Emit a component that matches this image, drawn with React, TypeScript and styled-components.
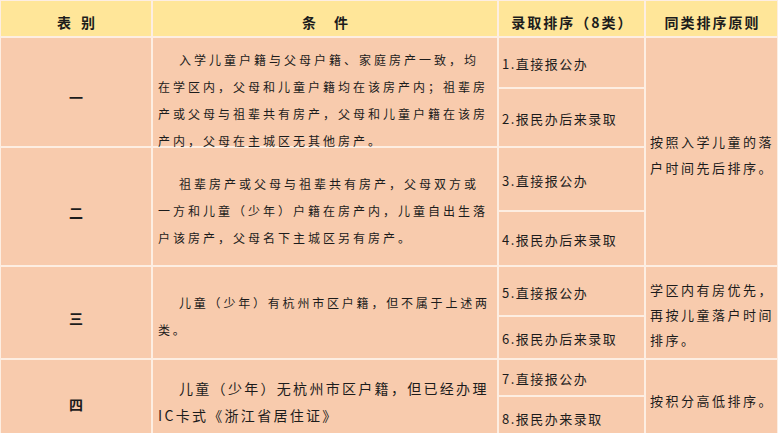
import * as React from 'react'
import styled, { createGlobalStyle } from 'styled-components'

const GlobalStyle = createGlobalStyle`
  html, body {
    margin: 0;
    padding: 0;
    background: #ffffff;
    overflow: hidden;
  }
  body {
    font-family: "Noto Sans CJK SC", "Noto Sans", sans-serif;
    color: #1c1c1c;
  }
`

const Table = styled.div`
  display: grid;
  grid-template-columns: 150px 344px 145px 131px;
  grid-template-rows: 35px 49px 57px 62px 53px 48px 41px 35px 40px;
  gap: 2px;
  padding: 1px;
  width: max-content;
  background: #fdeee2;
`

type Place = {
  $row: number
  $col: number
  $span?: number
}

const Cell = styled.div<Place>`
  grid-row: ${({ $row, $span = 1 }) => `${$row} / span ${$span}`};
  grid-column: ${({ $col }) => $col};
  background: #f8cbad;
  display: flex;
  align-items: center;
  box-sizing: border-box;
  min-width: 0;
`

const HeadCell = styled(Cell)<{ $spacing?: number }>`
  background: #ffe699;
  justify-content: center;
  padding-top: 7px;
  font-size: 14px;
  font-weight: 700;
  letter-spacing: ${({ $spacing = 2 }) => $spacing}px;
  text-indent: ${({ $spacing = 2 }) => $spacing}px;
  white-space: nowrap;
`

const GroupCell = styled(Cell)`
  justify-content: center;
  padding-top: 10px;
  font-size: 14px;
  font-weight: 700;
`

const ConditionCell = styled(Cell)<{ $offset: number }>`
  padding: ${({ $offset }) => $offset}px 4px 0 5px;
`

const Paragraph = styled.p<{ $size: number; $spacing: number }>`
  margin: 0;
  font-size: ${({ $size }) => $size}px;
  letter-spacing: ${({ $spacing }) => $spacing}px;
  line-height: 27px;
  text-indent: 21px;
  white-space: nowrap;
`

const OrderCell = styled(Cell)`
  padding: 2px 0 0 3px;
  font-size: 13px;
  letter-spacing: 1.5px;
  white-space: nowrap;
`

const RuleCell = styled(Cell)<{ $lineHeight: number; $offset: number }>`
  padding: ${({ $offset }) => $offset}px 0 0 4px;
  font-size: 13px;
  letter-spacing: 2.5px;
  line-height: ${({ $lineHeight }) => $lineHeight}px;
  white-space: nowrap;
`

type Group = {
  label: string
  lines: string[]
  size: number
  spacing: number
  offset: number
  orders: [string, string]
}

const groups: Group[] = [
  {
    label: '一',
    lines: [
      '入学儿童户籍与父母户籍、家庭房产一致，均',
      '在学区内，父母和儿童户籍均在该房产内；祖辈房',
      '产或父母与祖辈共有房产，父母和儿童户籍在该房',
      '产内，父母在主城区无其他房产。',
    ],
    size: 12,
    spacing: 3,
    offset: 16,
    orders: ['1.直接报公办', '2.报民办后来录取'],
  },
  {
    label: '二',
    lines: [
      '祖辈房产或父母与祖辈共有房产，父母双方或',
      '一方和儿童（少年）户籍在房产内，儿童自出生落',
      '户该房产，父母名下主城区另有房产。',
    ],
    size: 12,
    spacing: 3,
    offset: 7,
    orders: ['3.直接报公办', '4.报民办后来录取'],
  },
  {
    label: '三',
    lines: ['儿童（少年）有杭州市区户籍，但不属于上述两', '类。'],
    size: 12,
    spacing: 2.8,
    offset: 7,
    orders: ['5.直接报公办', '6.报民办后来录取'],
  },
  {
    label: '四',
    lines: ['儿童（少年）无杭州市区户籍，但已经办理', 'IC卡式《浙江省居住证》'],
    size: 14,
    spacing: 2.3,
    offset: 7,
    orders: ['7.直接报公办', '8.报民办来录取'],
  },
]

const rules = [
  { row: 2, span: 4, lineHeight: 26, offset: 6, lines: ['按照入学儿童的落', '户时间先后排序。'] },
  { row: 6, span: 2, lineHeight: 25, offset: 4, lines: ['学区内有房优先，', '再按儿童落户时间', '排序。'] },
  { row: 8, span: 2, lineHeight: 26, offset: 4, lines: ['按积分高低排序。'] },
]

const withBreaks = (lines: string[]) =>
  lines.map((line, i) => (
    <React.Fragment key={i}>
      {i > 0 && <br />}
      {line}
    </React.Fragment>
  ))

const App: React.FC = () => (
  <>
    <GlobalStyle />
    <Table>
      <HeadCell $row={1} $col={1} $spacing={10}>表别</HeadCell>
      <HeadCell $row={1} $col={2} $spacing={18}>条件</HeadCell>
      <HeadCell $row={1} $col={3}>录取排序（8类）</HeadCell>
      <HeadCell $row={1} $col={4}>同类排序原则</HeadCell>

      {groups.map((g, i) => {
        const row = 2 + i * 2
        return (
          <React.Fragment key={g.label}>
            <GroupCell $row={row} $col={1} $span={2}>{g.label}</GroupCell>
            <ConditionCell $row={row} $col={2} $span={2} $offset={g.offset}>
              <Paragraph $size={g.size} $spacing={g.spacing}>
                {withBreaks(g.lines)}
              </Paragraph>
            </ConditionCell>
            <OrderCell $row={row} $col={3}>{g.orders[0]}</OrderCell>
            <OrderCell $row={row + 1} $col={3}>{g.orders[1]}</OrderCell>
          </React.Fragment>
        )
      })}

      {rules.map((r) => (
        <RuleCell
          key={r.row}
          $row={r.row}
          $col={4}
          $span={r.span}
          $lineHeight={r.lineHeight}
          $offset={r.offset}
        >
          <div>{withBreaks(r.lines)}</div>
        </RuleCell>
      ))}
    </Table>
  </>
)

export default App
